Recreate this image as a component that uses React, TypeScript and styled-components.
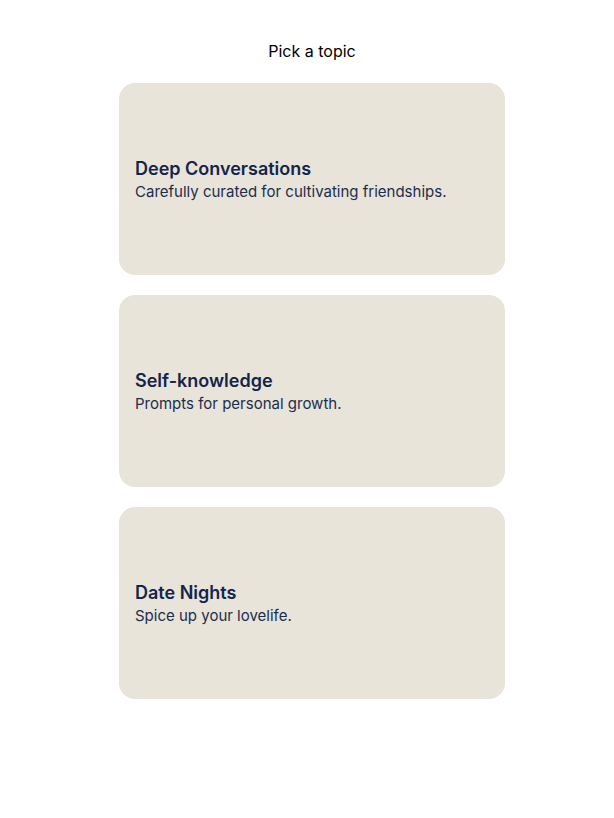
import React from "react";
import styled, { createGlobalStyle } from "styled-components";

const Global = createGlobalStyle`
  html, body { margin: 0; padding: 0; background: #ffffff; }
  body { font-family: Inter, "Noto Sans", sans-serif; }
`;

const Page = styled.div`
  display: flex;
  flex-direction: column;
  align-items: center;
  padding: 39px 0 0 10px;
`;

const Heading = styled.h1`
  margin: 0 0 20px;
  font-size: 16px;
  line-height: 24px;
  font-weight: 400;
  color: #000000;
`;

const List = styled.div`
  display: flex;
  flex-direction: column;
  gap: 20px;
  width: 386px;
`;

const Card = styled.div`
  height: 192px;
  box-sizing: border-box;
  padding: 2px 16px 0;
  background: #e8e4da;
  border-radius: 16px;
  display: flex;
  flex-direction: column;
  justify-content: center;
`;

const Title = styled.h2`
  margin: 0;
  font-size: 18px;
  line-height: 24px;
  font-weight: 600;
  color: #13254a;
`;

const Desc = styled.p`
  margin: 0;
  font-size: 15px;
  line-height: 22px;
  color: #1c2d4c;
`;

const topics = [
  { title: "Deep Conversations", desc: "Carefully curated for cultivating friendships." },
  { title: "Self-knowledge", desc: "Prompts for personal growth." },
  { title: "Date Nights", desc: "Spice up your lovelife." },
];

export default function App() {
  return (
    <>
      <Global />
      <Page>
        <Heading>Pick a topic</Heading>
        <List>
          {topics.map((t) => (
            <Card key={t.title}>
              <Title>{t.title}</Title>
              <Desc>{t.desc}</Desc>
            </Card>
          ))}
        </List>
      </Page>
    </>
  );
}
